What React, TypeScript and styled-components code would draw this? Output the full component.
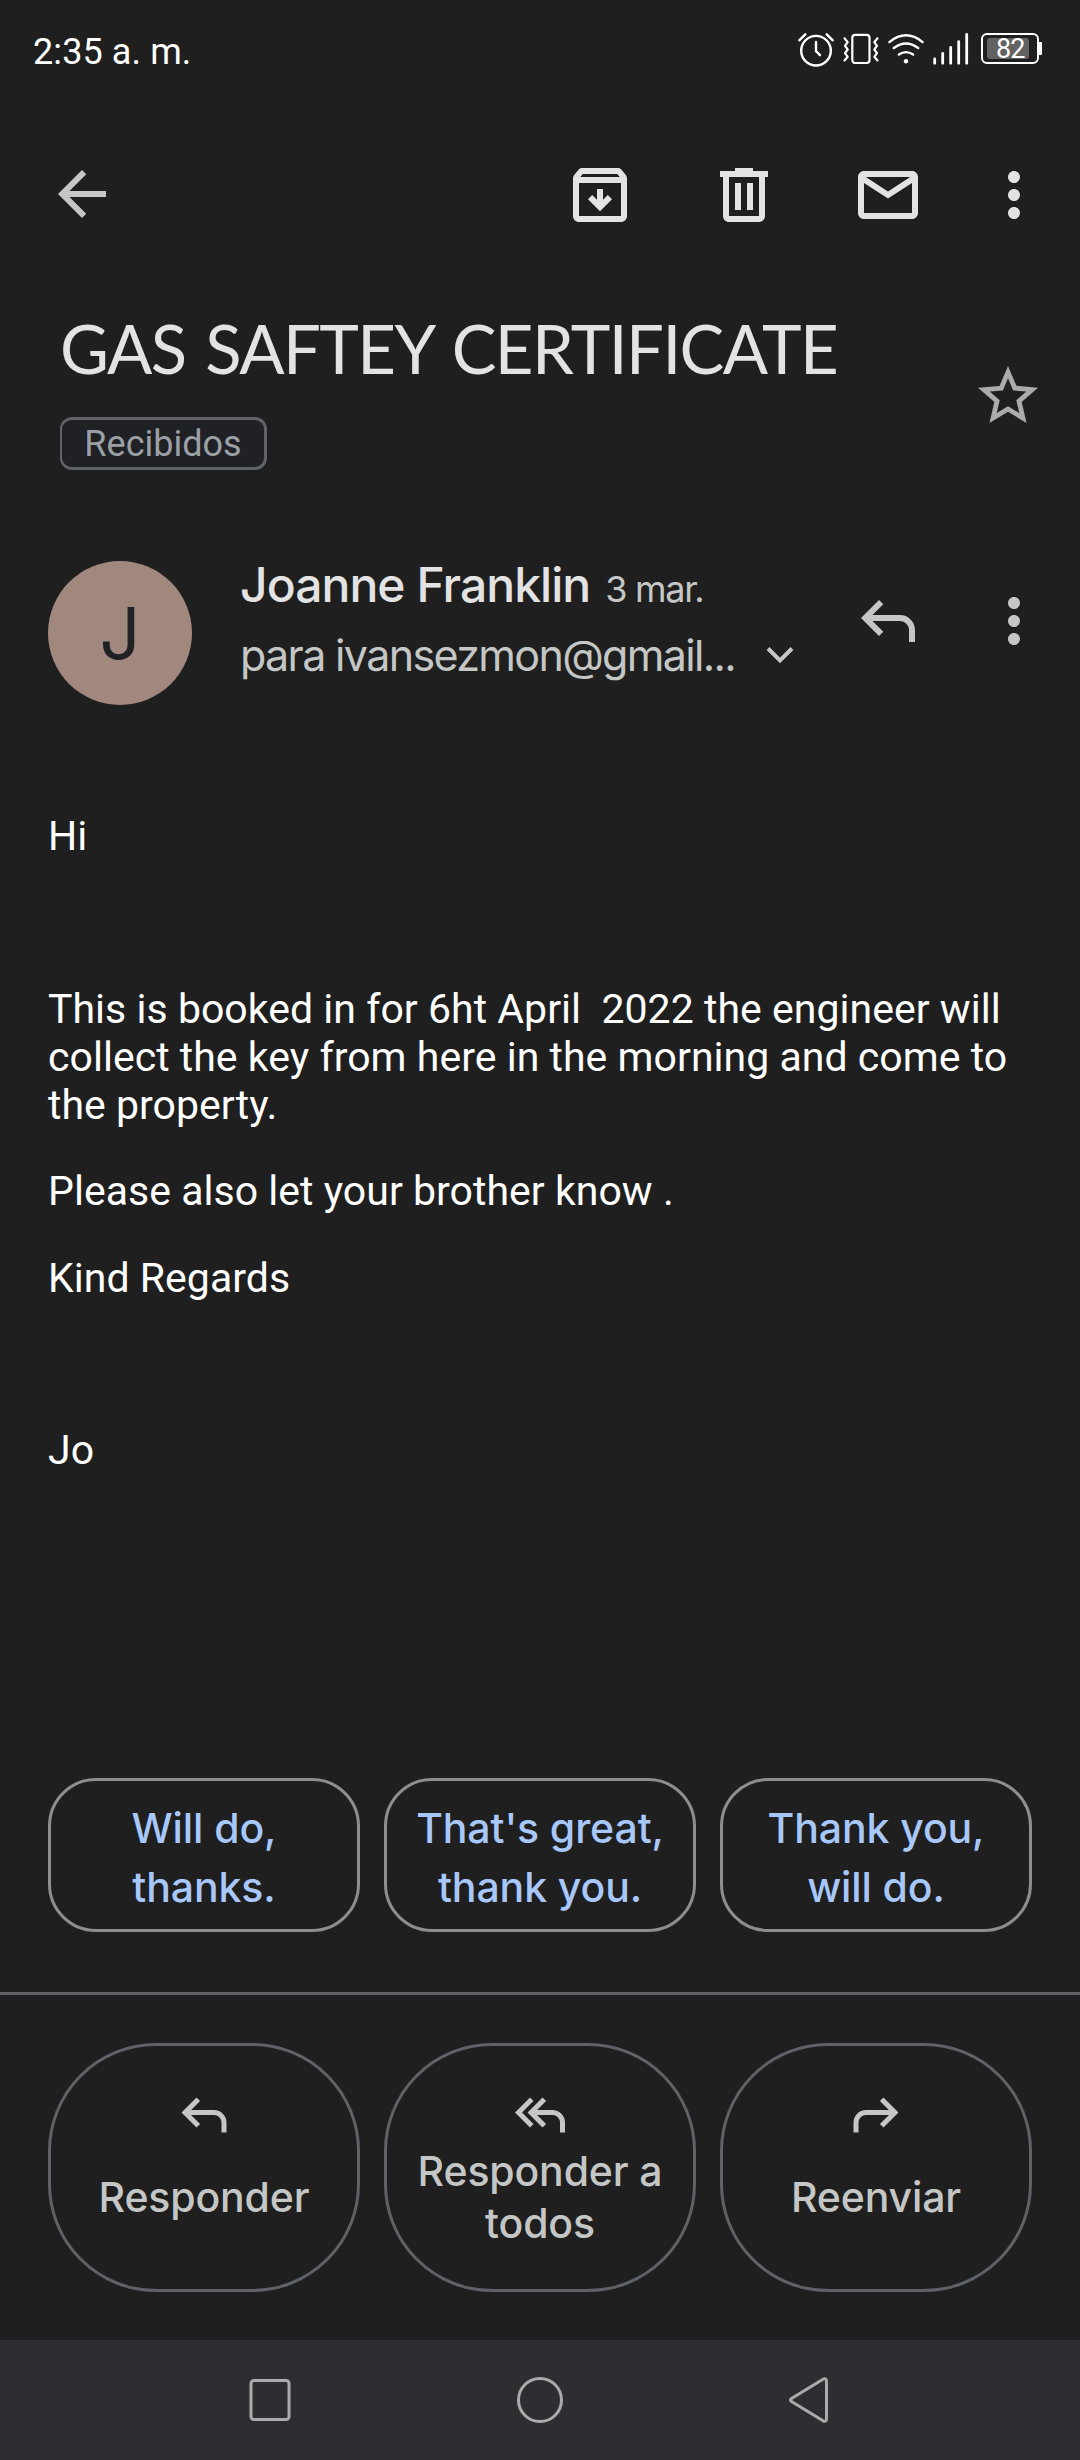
import React from "react";
import styled, { createGlobalStyle } from "styled-components";

const GlobalStyle = createGlobalStyle`
  *, *::before, *::after { box-sizing: border-box; }
  body { margin: 0; background: #1f1f1f; }
  button { appearance: none; background: none; border: 0; padding: 0; margin: 0; color: inherit; font: inherit; }
  svg { display: block; flex: none; }
  p { margin: 0; }
`;

const sans = `Inter, Roboto, sans-serif`;
const body = `Roboto, "Liberation Sans", sans-serif`;

const Screen = styled.div`
  width: 1080px;
  height: 2460px;
  display: flex;
  flex-direction: column;
  background: #1f1f1f;
  overflow: hidden;
`;

/* Status bar */
const StatusBar = styled.header`
  height: 100px;
  padding: 0 38px 0 33px;
  display: flex;
  align-items: center;
  justify-content: space-between;
  color: #fff;
`;
const Clock = styled.span`
  font: 400 36px/44px ${body};
  letter-spacing: 0.1px;
  padding-top: 3px;
`;
const StatusIcons = styled.div`
  display: flex;
  gap: 7px;
`;

/* Toolbar */
const Toolbar = styled.nav`
  height: 190px;
  padding: 0 30px 0 46px;
  display: flex;
  align-items: center;
  color: #e3e3e3;
`;
const IconButton = styled.button<{ $ml?: number }>`
  width: 72px;
  height: 72px;
  margin-left: ${(p) => p.$ml ?? 0}px;
`;
const BackButton = styled(IconButton)`
  margin-bottom: 2px;
  color: #c4c7c5;
`;
const Spacer = styled.div`
  flex: 1;
`;

/* Subject */
const SubjectRow = styled.section`
  height: 264px;
  padding: 18px 36px 0 60px;
  display: flex;
  justify-content: space-between;
  align-items: flex-start;
`;
const Title = styled.h1`
  margin: 0 0 29px;
  font: 400 67px/80px Lato, sans-serif;
  letter-spacing: -1.55px;
  word-spacing: 4px;
  color: #e3e3e3;
  white-space: nowrap;
`;
const Label = styled.span`
  display: flex;
  align-items: center;
  justify-content: center;
  width: 207px;
  height: 53px;
  border: 3px solid #5f6368;
  border-left-width: 2px;
  border-radius: 12px;
  background: #202124;
  color: #9aa0a6;
  font: 400 36px/46px ${body};
`;
const StarButton = styled(IconButton)`
  margin-top: 52px;
  color: #ababab;
`;

/* Sender */
const SenderRow = styled.section`
  height: 258px;
  padding: 0 30px 0 48px;
  display: flex;
  align-items: flex-start;
`;
const Avatar = styled.div`
  width: 144px;
  height: 144px;
  margin: 7px 48px 0 0;
  border-radius: 50%;
  background: #a1887f;
  color: #202124;
  display: flex;
  align-items: center;
  justify-content: center;
  font: 400 72px/72px ${sans};
`;
const SenderText = styled.div`
  width: 572px;
  display: flex;
  flex-direction: column;
  gap: 10px;
`;
const NameLine = styled.div`
  display: flex;
  align-items: baseline;
  gap: 15px;
  height: 61px;
  white-space: nowrap;
`;
const Name = styled.span`
  font: 500 48px/61px ${sans};
  letter-spacing: -0.95px;
  color: #e3e3e3;
`;
const DateText = styled.span`
  font: 400 36px/61px ${sans};
  letter-spacing: -1.3px;
  color: #c4c7c5;
`;
const Recipient = styled.div`
  display: flex;
  align-items: center;
  gap: 31px;
  font: 400 43px/60px ${sans};
  letter-spacing: -1.65px;
  color: #c4c7c5;
  white-space: nowrap;
`;
const SenderActions = styled.div`
  display: flex;
  flex: 1;
  justify-content: flex-end;
  gap: 54px;
  padding-top: 31px;
  color: #c4c7c5;
`;

/* Message */
const Message = styled.article`
  flex: 1;
  padding: 0 40px 0 48px;
  display: flex;
  flex-direction: column;
  gap: 38.4px;
  font: 400 41px/48px ${body};
  letter-spacing: 0.03px;
  color: #fff;
  white-space: pre;
`;
const Paragraph = styled.p`
  min-height: 48px;
`;

/* Replies and actions */
const ButtonGrid = styled.div<{ $bottom: number }>`
  display: grid;
  grid-template-columns: repeat(3, 312px);
  gap: 24px;
  padding: 0 48px;
  margin-bottom: ${(p) => p.$bottom}px;
`;
const SmartReply = styled.button`
  height: 154px;
  border: 3px solid #8e8e8e;
  border-radius: 48px;
  padding-top: 5px;
  color: #a8c7fa;
  font: 500 41px/59px ${sans};
  letter-spacing: -0.1px;
  white-space: pre-line;
`;
const Divider = styled.div`
  height: 3px;
  margin-bottom: 48px;
  background: #5f6368;
`;
const ActionButton = styled.button`
  height: 249px;
  border: 3px solid #5f6368;
  border-radius: 108px;
  padding-top: 39px;
  display: flex;
  flex-direction: column;
  align-items: center;
  color: #c4c7c5;
`;
const ActionLabel = styled.span`
  height: 104px;
  display: flex;
  align-items: center;
  text-align: center;
  font: 500 41px/52px ${sans};
  letter-spacing: -0.15px;
  white-space: pre-line;
`;

/* System navigation */
const SystemNav = styled.footer`
  height: 120px;
  background: #2d2e32;
  display: flex;
  align-items: center;
  justify-content: center;
  gap: 210px;
`;

const Svg = ({ size = 72, d }: { size?: number; d: string }) => (
  <svg width={size} height={size} viewBox="0 0 24 24" fill="currentColor">
    <path fillRule="evenodd" d={d} />
  </svg>
);

const icons = {
  back: "M20 11H7.83l5.59-5.59L12 4l-8 8 8 8 1.41-1.41L7.83 13H20v-2z",
  archive:
    "M20.54 5.23l-1.39-1.68C18.88 3.21 18.47 3 18 3H6c-.47 0-.88.21-1.16.55L3.46 5.23C3.17 5.57 3 6.02 3 6.5V19c0 1.1.9 2 2 2h14c1.1 0 2-.9 2-2V6.5c0-.48-.17-.93-.46-1.27zM6.24 5h11.52l.83 1H5.42l.82-1zM5 19V8h14v11H5zM13 10h-2v3.6l-1.6-1.6L8 13.4l4 4 4-4-1.4-1.4-1.6 1.6z",
  trash:
    "M9 3v1H4v2h1v13c0 1.1.9 2 2 2h10c1.1 0 2-.9 2-2V6h1V4h-5V3H9zM7 6h10v13H7V6zM9 8h2v9H9V8zM13 8h2v9h-2V8z",
  mail:
    "M20 4H4c-1.1 0-2 .9-2 2v12c0 1.1.9 2 2 2h16c1.1 0 2-.9 2-2V6c0-1.1-.9-2-2-2zM19.4 6L12 10.8 4.6 6h14.8zM20 18H4V8l8 5.2L20 8v10z",
  more:
    "M12 8c1.1 0 2-.9 2-2s-.9-2-2-2-2 .9-2 2 .9 2 2 2zm0 2c-1.1 0-2 .9-2 2s.9 2 2 2 2-.9 2-2-.9-2-2-2zm0 6c-1.1 0-2 .9-2 2s.9 2 2 2 2-.9 2-2-.9-2-2-2z",
  star:
    "M22 9.24l-7.19-.62L12 2 9.19 8.63 2 9.24l5.46 4.73L5.82 21 12 17.27 18.18 21l-1.63-7.03L22 9.24zM12 15.4l-3.76 2.27 1-4.28-3.32-2.88 4.38-.38L12 6.1l1.71 4.04 4.38.38-3.32 2.88 1 4.28L12 15.4z",
  reply:
    "M19 19v-4q0-1.25-.875-2.125T16 12H6.825l3.6 3.6L9 17l-6-6 6-6 1.425 1.4-3.6 3.6H16q2.075 0 3.538 1.463T21 15v4z",
  replyAll:
    "M8 17l-6-6 6-6 1.4 1.4L4.8 11l4.6 4.6zM20 19v-4q0-1.25-.875-2.125T17 12H10.825l3.6 3.6L13 17l-6-6 6-6 1.425 1.4-3.6 3.6H17q2.075 0 3.538 1.463T22 15v4z",
  forward:
    "M5 19v-4q0-1.25.875-2.125T8 12h9.175l-3.6 3.6L15 17l6-6-6-6-1.425 1.4 3.6 3.6H8q-2.075 0-3.538 1.463T3 15v4z",
};

const line = { fill: "none", stroke: "currentColor", strokeLinecap: "round", strokeLinejoin: "round" } as const;

const AlarmIcon = () => (
  <svg width="38" height="40" viewBox="0 0 38 40" {...line} strokeWidth="2.4">
    <circle cx="19" cy="20.7" r="14.8" />
    <path d="M19 12v9.2l4 4M2.300 10.300l6-6M35.700 10.300l-6-6" />
  </svg>
);
const VibrateIcon = () => (
  <svg width="38" height="40" viewBox="0 0 38 40" {...line} strokeWidth="2.2">
    <rect x="10.300" y="4.800" width="17.200" height="28.200" rx="3" />
    <path d="M2.500 8.300l3.200 3.800-2.700 3.800 2.700 3.600-2.700 3.700 2.700 3.600-3.200 3.600M35.500 8.300l-3.200 3.800 2.700 3.800-2.700 3.600 2.700 3.700-2.700 3.600 3.200 3.600" />
  </svg>
);
const WifiIcon = () => (
  <svg width="38" height="40" viewBox="0 0 38 40" {...line} strokeWidth="2.4">
    <path d="M2.400 12.100q16.600-13.500 33.200 0M6.800 18q12.200-9.200 24.400 0M11.900 24.600q7.100-5 14.200 0" />
    <circle cx="19" cy="31.300" r="2.200" fill="currentColor" stroke="none" />
  </svg>
);
const SignalIcon = () => (
  <svg width="38" height="40" viewBox="0 0 38 40" {...line} strokeWidth="2.8">
    <path d="M2.700 33.300v-4.300M10.700 33.300v-10M18.700 33.300v-16M26.700 33.300v-21.600M34.700 33.300v-29" />
  </svg>
);

const BatteryWrap = styled.div`
  display: flex;
  align-items: center;
  height: 31px;
  margin: 3px 0 0 4px;
`;
const BatteryCell = styled.div`
  width: 58px;
  height: 31px;
  padding: 3px 8px 3px 4px;
  border: 2px solid #fff;
  border-radius: 6px;
`;
const BatteryLevel = styled.div`
  width: 42px;
  height: 21px;
  border-radius: 3px;
  background: #626262;
  padding-left: 9px;
  font: 400 27px/22px ${body};
  letter-spacing: -0.8px;
`;
const BatteryTip = styled.div`
  width: 3px;
  height: 13px;
  background: #fff;
  border-radius: 0 1px 1px 0;
`;

const smartReplies = ["Will do,\nthanks.", "That's great,\nthank you.", "Thank you,\nwill do."];
const actions = [
  { label: "Responder", icon: icons.reply },
  { label: "Responder a\ntodos", icon: icons.replyAll },
  { label: "Reenviar", icon: icons.forward },
];
const paragraphs = [
  "Hi",
  "",
  "This is booked in for 6ht April  2022 the engineer will\ncollect the key from here in the morning and come to\nthe property.",
  "Please also let your brother know .",
  "Kind Regards",
  "",
  "Jo",
];

export default function App() {
  return (
    <Screen>
      <GlobalStyle />
      <StatusBar>
        <Clock>2:35 a. m.</Clock>
        <StatusIcons>
          <AlarmIcon />
          <VibrateIcon />
          <WifiIcon />
          <SignalIcon />
          <BatteryWrap>
            <BatteryCell>
              <BatteryLevel>82</BatteryLevel>
            </BatteryCell>
            <BatteryTip />
          </BatteryWrap>
        </StatusIcons>
      </StatusBar>

      <Toolbar>
        <BackButton><Svg d={icons.back} /></BackButton>
        <Spacer />
        <IconButton><Svg d={icons.archive} /></IconButton>
        <IconButton $ml={72}><Svg d={icons.trash} /></IconButton>
        <IconButton $ml={72}><Svg d={icons.mail} /></IconButton>
        <IconButton $ml={54}><Svg d={icons.more} /></IconButton>
      </Toolbar>

      <SubjectRow>
        <div>
          <Title>GAS SAFTEY CERTIFICATE</Title>
          <Label>Recibidos</Label>
        </div>
        <StarButton><Svg d={icons.star} /></StarButton>
      </SubjectRow>

      <SenderRow>
        <Avatar>J</Avatar>
        <SenderText>
          <NameLine>
            <Name>Joanne Franklin</Name>
            <DateText>3 mar.</DateText>
          </NameLine>
          <Recipient>
            <span>para ivansezmon@gmail...</span>
            <svg width="28" height="18" viewBox="0 0 28 18" fill="none" stroke="currentColor" strokeWidth="4">
              <path d="M2 2.500l12 12 12-12" />
            </svg>
          </Recipient>
        </SenderText>
        <SenderActions>
          <IconButton><Svg d={icons.reply} /></IconButton>
          <IconButton><Svg d={icons.more} /></IconButton>
        </SenderActions>
      </SenderRow>

      <Message>
        {paragraphs.map((text, i) => (
          <Paragraph key={i}>{text}</Paragraph>
        ))}
      </Message>

      <ButtonGrid $bottom={60}>
        {smartReplies.map((text) => (
          <SmartReply key={text}>{text}</SmartReply>
        ))}
      </ButtonGrid>
      <Divider />
      <ButtonGrid $bottom={48}>
        {actions.map((a) => (
          <ActionButton key={a.label}>
            <Svg size={60} d={a.icon} />
            <ActionLabel>{a.label}</ActionLabel>
          </ActionButton>
        ))}
      </ButtonGrid>

      <SystemNav>
        <svg width="60" height="60" viewBox="0 0 60 60" {...line} stroke="#ababab" strokeWidth="3">
          <rect x="11" y="10.500" width="38" height="39" rx="3" />
        </svg>
        <svg width="60" height="60" viewBox="0 0 60 60" {...line} stroke="#ababab" strokeWidth="3">
          <circle cx="30" cy="30" r="21.500" />
        </svg>
        <svg width="60" height="60" viewBox="0 0 60 60" {...line} stroke="#ababab" strokeWidth="3">
          <path d="M11.500 28.500L43 9.200Q46.500 7.500 46.500 11.500V48.500Q46.500 52.500 43 50.800L11.500 31.500Q9.500 30 11.500 28.500z" />
        </svg>
      </SystemNav>
    </Screen>
  );
}
